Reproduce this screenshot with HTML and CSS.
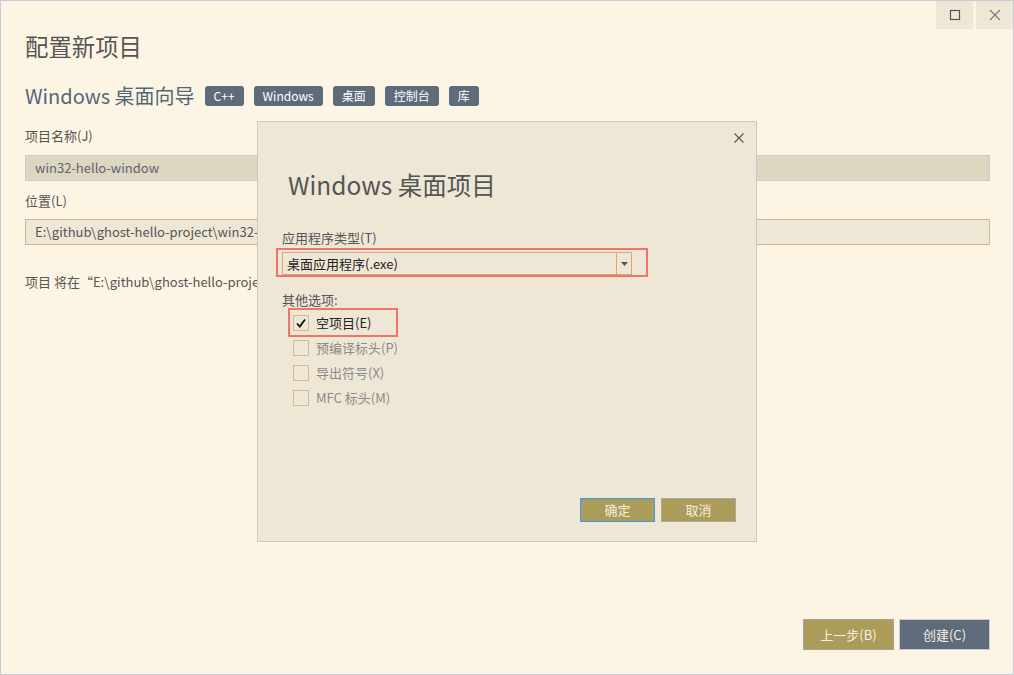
FILE: index.html
```html
<!DOCTYPE html>
<html lang="zh-CN">
<head>
<meta charset="utf-8">
<title>配置新项目</title>
<link rel="stylesheet" href="styles.css">
</head>
<body>
<div class="window">
  <div class="titlebar">
    <button class="wbtn" aria-label="最大化">
      <svg width="12" height="12" viewBox="0 0 12 12"><rect x="1.5" y="1.5" width="9" height="9" fill="none" stroke="#555" stroke-width="1.2"/></svg>
    </button>
    <button class="wbtn" aria-label="关闭">
      <svg width="12" height="12" viewBox="0 0 12 12"><path d="M1 1 L11 11 M11 1 L1 11" stroke="#777" stroke-width="1.1" fill="none"/></svg>
    </button>
  </div>
  <div class="content">
    <h1 class="title">配置新项目</h1>
    <div class="subhead">
      <span class="subtitle">Windows 桌面向导</span>
      <span class="tags">
        <span class="tag">C++</span>
        <span class="tag">Windows</span>
        <span class="tag">桌面</span>
        <span class="tag">控制台</span>
        <span class="tag">库</span>
      </span>
    </div>
    <div class="label l1">项目名称(J)</div>
    <div class="input input-name">win32-hello-window</div>
    <div class="label l2">位置(L)</div>
    <div class="input input-loc">E:\github\ghost-hello-project\win32-st</div>
    <p class="note">项目 将在“E:\github\ghost-hello-project\win32-starter\win32-hello-window”中创建</p>
    <div class="footer">
      <button class="btn btn-back">上一步(B)</button>
      <button class="btn btn-create">创建(C)</button>
    </div>
  </div>

  <div class="dialog">
    <div class="dlg-head">
      <button class="dlg-close" aria-label="关闭">
        <svg width="10" height="10" viewBox="0 0 10 10"><path d="M0.5 0.5 L9.5 9.5 M9.5 0.5 L0.5 9.5" stroke="#555" stroke-width="1.1" fill="none"/></svg>
      </button>
    </div>
    <h2 class="dlg-title">Windows 桌面项目</h2>
    <div class="dlg-label">应用程序类型(T)</div>
    <div class="select-wrap">
      <div class="select">
        <span class="select-text">桌面应用程序(.exe)</span>
        <span class="select-arrow"><svg width="7" height="4" viewBox="0 0 7 4"><path d="M0 0 H7 L3.5 4 Z" fill="#555"/></svg></span>
      </div>
      <div class="hl hl-select"></div>
    </div>
    <div class="dlg-label opts">其他选项:</div>
    <div class="checks">
      <div class="check checked">
        <span class="box"><svg width="14" height="14" viewBox="0 0 14 14"><path d="M3 7.5 L5.8 10.5 L11 3.5" stroke="#111" stroke-width="1.8" fill="none"/></svg></span>
        <span class="ctext">空项目(E)</span>
        <div class="hl hl-check"></div>
      </div>
      <div class="check"><span class="box"></span><span class="ctext">预编译标头(P)</span></div>
      <div class="check"><span class="box"></span><span class="ctext">导出符号(X)</span></div>
      <div class="check"><span class="box"></span><span class="ctext">MFC 标头(M)</span></div>
    </div>
    <div class="dlg-buttons">
      <button class="dbtn dbtn-ok">确定</button>
      <button class="dbtn dbtn-cancel">取消</button>
    </div>
  </div>
</div>
</body>
</html>
```

FILE: styles.css
```css
* { box-sizing: border-box; }
html, body { margin: 0; padding: 0; }
body {
  width: 1014px;
  height: 675px;
  overflow: hidden;
  font-family: "Noto Sans CJK SC", "Noto Sans", sans-serif;
  color: #555;
  background: #fdf5e3;
}
button { font-family: inherit; }

.window {
  position: relative;
  width: 1014px;
  height: 675px;
  border: 1px solid #c6cad9;
  background: #fdf5e3;
  display: flex;
  flex-direction: column;
  overflow: hidden;
}

.titlebar {
  display: flex;
  justify-content: flex-end;
  gap: 3px;
  height: 28px;
}
.wbtn {
  width: 37px;
  height: 28px;
  border: 0;
  padding: 0;
  background: #efe7d5;
  display: flex;
  align-items: center;
  justify-content: center;
}

.content {
  flex: 1;
  display: flex;
  flex-direction: column;
  padding: 0 23px 24px 24px;
}

.title {
  margin: 2px 0 0;
  font-size: 23.4px;
  font-weight: normal;
  line-height: 30px;
  color: #555;
}

.subhead {
  margin-top: 25px;
  height: 20px;
  display: flex;
  align-items: center;
}
.subtitle {
  font-size: 20px;
  line-height: 20px;
  color: #52687a;
}
.tags {
  display: flex;
  gap: 10px;
  margin-left: 10px;
}
.tag {
  height: 20px;
  padding: 0 9px;
  border-radius: 3px;
  background: #5f6b7a;
  color: #fff;
  font-size: 12px;
  line-height: 20px;
}

.label {
  font-size: 13px;
  line-height: 18px;
  color: #555;
}
.l1 { margin-top: 21px; }
.l2 { margin-top: 11px; }

.input {
  height: 26px;
  width: 965px;
  padding: 0 9px;
  font-size: 13px;
  line-height: 24px;
  white-space: nowrap;
  overflow: hidden;
}
.input-name {
  margin-top: 10px;
  background: #ddd6c1;
  border: 1px solid #cdcbd2;
  color: #5f6470;
}
.input-loc {
  margin-top: 9px;
  background: #efe7d5;
  border: 1px solid #d6b48d;
  color: #555;
}

.note {
  margin: 28px 0 0;
  font-size: 13px;
  line-height: 18px;
  white-space: nowrap;
  color: #555;
}

.footer {
  margin-top: auto;
  display: flex;
  justify-content: flex-end;
  gap: 5px;
}
.btn {
  width: 91px;
  height: 31px;
  padding: 0;
  font-size: 13px;
  color: #f4efe0;
}
.btn-back {
  background: #ab9c5a;
  border: 1px solid #a6a39a;
}
.btn-create {
  background: #5f6b7a;
  border: 1px solid #c6cad9;
}

/* dialog overlay */
.dialog {
  position: absolute;
  left: 256px;
  top: 120px;
  width: 500px;
  height: 421px;
  background: #efe7d5;
  border: 1px solid #c9c8cd;
  display: flex;
  flex-direction: column;
  padding: 0 20px 19px 24px;
}
.dlg-head {
  height: 31px;
  display: flex;
  justify-content: flex-end;
  align-items: center;
  margin-right: -10px;
}
.dlg-close {
  width: 14px;
  height: 14px;
  padding: 0;
  border: 0;
  background: transparent;
  display: flex;
  align-items: center;
  justify-content: center;
}
.dlg-title {
  margin: 16px 0 0 6px;
  font-size: 24.5px;
  font-weight: normal;
  line-height: 32px;
  color: #555;
}
.dlg-label {
  margin-top: 28px;
  font-size: 13px;
  line-height: 18px;
  color: #555;
}
.select-wrap {
  position: relative;
  margin-top: 5px;
  width: 350px;
  height: 23px;
}
.select {
  display: flex;
  height: 23px;
  border: 1px solid #d4a97a;
  background: #efe7d5;
}
.select-text {
  flex: 1;
  padding-left: 4px;
  font-size: 13px;
  line-height: 21px;
  color: #222;
}
.select-arrow {
  width: 15px;
  border-left: 1px solid #d4a97a;
  display: flex;
  align-items: center;
  justify-content: center;
}
.hl {
  position: absolute;
  border: 2px solid #f07468;
  pointer-events: none;
}
.hl-select {
  left: -6px;
  top: -4px;
  width: 372px;
  height: 29px;
}
.opts { margin-top: 16px; }

.checks {
  margin-top: 1px;
  padding-left: 11px;
  display: flex;
  flex-direction: column;
}
.check {
  position: relative;
  height: 25px;
  display: flex;
  align-items: center;
  gap: 7px;
}
.box {
  width: 16px;
  height: 16px;
  border: 1px solid #d8b894;
  display: flex;
  align-items: center;
  justify-content: center;
}
.ctext {
  font-size: 13px;
  line-height: 18px;
  color: #8a8a8a;
}
.checked .ctext { color: #222; }
.hl-check {
  left: -5px;
  top: -2px;
  width: 110px;
  height: 29px;
}

.dlg-buttons {
  margin-top: auto;
  display: flex;
  justify-content: flex-end;
  gap: 6px;
}
.dbtn {
  width: 75px;
  height: 24px;
  padding: 0;
  font-size: 13px;
  line-height: 22px;
  color: #f4efe0;
  background: #ab9c5a;
}
.dbtn-ok { border: 1px solid #3a9bf2; }
.dbtn-cancel { border: 1px solid #a9a7a2; }
```
